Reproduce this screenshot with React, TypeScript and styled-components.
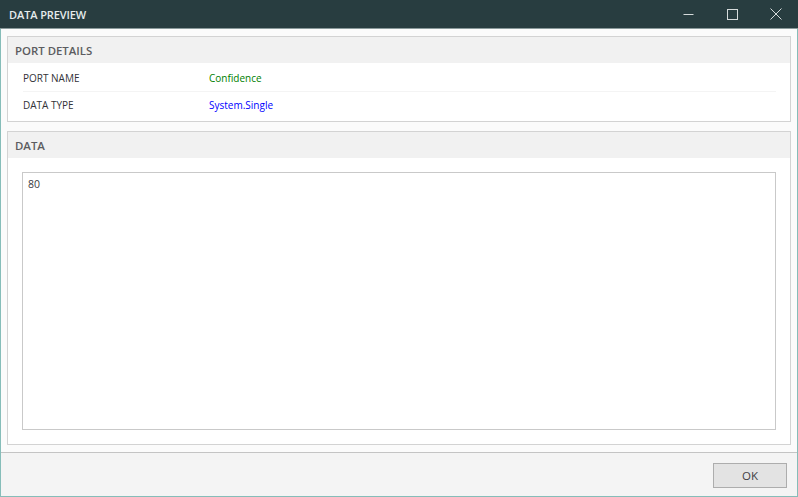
import React from 'react';
import styled, { createGlobalStyle } from 'styled-components';

const GlobalStyle = createGlobalStyle`
  html, body {
    margin: 0;
    padding: 0;
    width: 100%;
    height: 100%;
    overflow: hidden;
    background: #f3f3f3;
  }
  #root {
    height: 100%;
  }
`;

const Window = styled.div`
  box-sizing: border-box;
  width: 798px;
  height: 497px;
  display: flex;
  flex-direction: column;
  border-left: 1px solid #86bdb9;
  border-right: 1px solid #86bdb9;
  border-bottom: 1px solid #86bdb9;
  font-family: 'Open Sans', 'Noto Sans', sans-serif;
  background: #f3f3f3;
`;

const TitleBar = styled.div`
  height: 29px;
  flex: none;
  margin: 0 -1px;
  padding-left: 9px;
  display: flex;
  align-items: center;
  justify-content: space-between;
  background: #283d40;
  border-bottom: 1px solid #8a9a9b;
  box-sizing: border-box;
`;

const Title = styled.div`
  color: #e6ecec;
  font-size: 11px;
  font-weight: 600;
  letter-spacing: -0.1px;
`;

const WindowButtons = styled.div`
  display: flex;
  height: 100%;
`;

const WindowButton = styled.div`
  width: 44px;
  display: flex;
  align-items: center;
  justify-content: center;
  color: #d5dbdb;
`;

const Content = styled.div`
  flex: 1;
  min-height: 0;
  display: flex;
  flex-direction: column;
  gap: 9px;
  padding: 7px 6px 7px 6px;
  background: #fbfbfb;
`;

const Panel = styled.section<{ $grow?: boolean }>`
  box-sizing: border-box;
  display: flex;
  flex-direction: column;
  flex: ${({ $grow }) => ($grow ? '1' : 'none')};
  min-height: 0;
  background: #ffffff;
  border: 1px solid #d3d3d3;
`;

const PanelHeader = styled.h2`
  box-sizing: border-box;
  margin: 0;
  height: 26px;
  flex: none;
  padding-left: 7px;
  display: flex;
  align-items: center;
  background: #f1f1f1;
  color: #5c5c60;
  font-size: 11.4px;
  font-weight: 600;
`;

const Rows = styled.div`
  padding: 0 14px 2px 15px;
`;

const Row = styled.div`
  box-sizing: border-box;
  display: grid;
  grid-template-columns: 186px 1fr;
  align-items: center;
  height: 28px;
  padding-top: 1px;
  font-size: 10px;
  color: #333338;

  & + & {
    padding: 0 0 1px;
    border-top: 1px solid #f4f4f4;
  }
`;

const Value = styled.span<{ $color: string }>`
  color: ${({ $color }) => $color};
`;

const DataBody = styled.div`
  flex: 1;
  min-height: 0;
  display: flex;
  padding: 14px;
`;

const DataBox = styled.div`
  box-sizing: border-box;
  flex: 1;
  padding: 3px 5px;
  border: 1px solid #c9c9c9;
  background: #ffffff;
  color: #3a3a40;
  font-size: 10.5px;
  line-height: 16px;
`;

const Footer = styled.div`
  box-sizing: border-box;
  height: 44px;
  flex: none;
  display: flex;
  align-items: flex-start;
  justify-content: flex-end;
  padding: 10px 10px 0 0;
  background: #f4f4f4;
  border-top: 1px solid #c4c4c4;
`;

const OkButton = styled.button`
  box-sizing: border-box;
  width: 74px;
  height: 25px;
  padding: 0;
  border: 1px solid #adadad;
  background: #e3e3e3;
  color: #3f3f44;
  font-family: inherit;
  font-size: 11.5px;
`;

export default function App() {
  return (
    <>
      <GlobalStyle />
      <Window>
        <TitleBar>
          <Title>DATA PREVIEW</Title>
          <WindowButtons>
            <WindowButton>
              <svg width="11" height="11" viewBox="0 0 11 11">
                <path d="M0.5 5.5H10.5" stroke="currentColor" fill="none" />
              </svg>
            </WindowButton>
            <WindowButton>
              <svg width="11" height="11" viewBox="0 0 11 11">
                <rect x="0.5" y="0.5" width="10" height="10" stroke="currentColor" fill="none" />
              </svg>
            </WindowButton>
            <WindowButton>
              <svg width="12" height="12" viewBox="0 0 12 12">
                <path d="M0.5 0.5L11.5 11.5M11.5 0.5L0.5 11.5" stroke="currentColor" fill="none" />
              </svg>
            </WindowButton>
          </WindowButtons>
        </TitleBar>
        <Content>
          <Panel>
            <PanelHeader>PORT DETAILS</PanelHeader>
            <Rows>
              <Row>
                <span>PORT NAME</span>
                <Value $color="#008000">Confidence</Value>
              </Row>
              <Row>
                <span>DATA TYPE</span>
                <Value $color="#0000ff">System.Single</Value>
              </Row>
            </Rows>
          </Panel>
          <Panel $grow>
            <PanelHeader>DATA</PanelHeader>
            <DataBody>
              <DataBox>80</DataBox>
            </DataBody>
          </Panel>
        </Content>
        <Footer>
          <OkButton>OK</OkButton>
        </Footer>
      </Window>
    </>
  );
}
